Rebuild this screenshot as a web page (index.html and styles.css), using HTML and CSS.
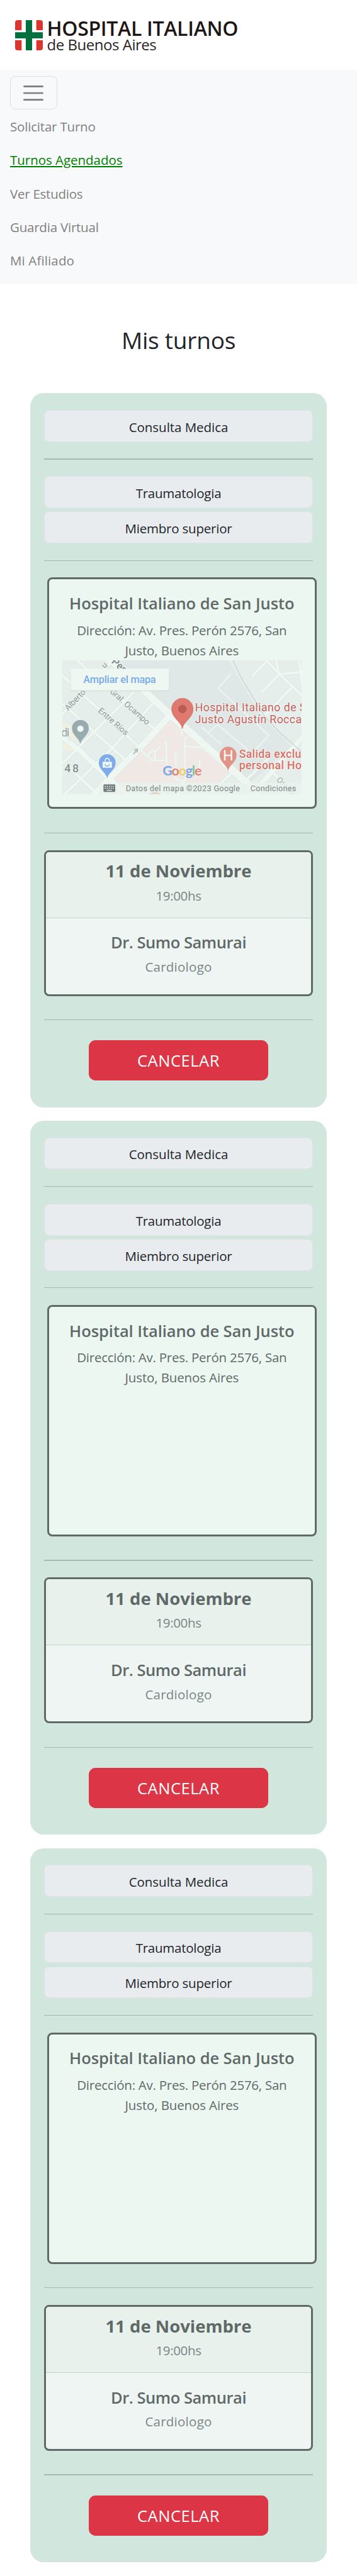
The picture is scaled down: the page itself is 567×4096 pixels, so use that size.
FILE: index.html
```html
<!DOCTYPE html>
<html lang="es">
<head>
<meta charset="utf-8">
<title>Mis turnos</title>
<link rel="stylesheet" href="styles.css">
</head>
<body>
<header class="brand">
  <svg class="brand-mark" viewBox="0 0 66 72">
    <path fill="#db3530" d="M6 0H15.500V24H0V6Q0 0 6 0ZM50.500 0H60Q66 0 66 6V24H50.500ZM0 48H15.500V72H6Q0 72 0 66ZM50.500 48H66V66Q66 72 60 72H50.500Z"/>
    <path fill="#02713e" d="M25.500 0H40.500V29H66V43.500H40.500V72H25.500V43.500H0V29H25.500Z"/>
  </svg>
  <div class="brand-text">
    <div class="brand-name">HOSPITAL ITALIANO</div>
    <div class="brand-city">de Buenos Aires</div>
  </div>
</header>

<nav class="navbar">
  <button class="toggler" aria-label="Menu">
    <svg viewBox="0 0 30 30"><path d="M4 7h22M4 15h22M4 23h22" stroke="#7b7c7d" stroke-width="2" stroke-linecap="round"/></svg>
  </button>
  <a class="nav-link ls-solicitar">Solicitar Turno</a>
  <a class="nav-link active">Turnos Agendados</a>
  <a class="nav-link ls-ver">Ver Estudios</a>
  <a class="nav-link ls-guardia">Guardia Virtual</a>
  <a class="nav-link ls-afiliado">Mi Afiliado</a>
</nav>

<main>
  <h1>Mis turnos</h1>

  <section class="turno">
    <div class="pill">Consulta Medica</div>
    <hr>
    <div class="pill pill-area">Traumatologia</div>
    <div class="pill pill-zone">Miembro superior</div>
    <hr>
    <div class="place">
      <h2>Hospital Italiano de San Justo</h2>
      <p class="address"><span class="line-1">Dirección: Av. Pres. Perón 2576, San</span> <span class="line-2">Justo, Buenos Aires</span></p>
      <svg class="map" viewBox="0 0 570 320">
        <rect width="570" height="320" fill="#e6eeeb"/>
        <path fill="#e0e8e7" d="M130 0H395L472 130L545 205L440 300L250 120Z"/>
        <path fill="#f0f0de" d="M0 148L22 156L39 196L18 180L0 170ZM0 203L9 191L32 213L25 220L0 209Z"/>
        <path fill="#efe8e4" d="M259 143L219 179L185 213L125 279L139 293H375L399 266L285 163Z"/>
        <g fill="none" stroke-linejoin="round">
          <g stroke="#dbe4e1">
            <path stroke-width="8" d="M0 36L185 209M35 0L219 163M0 103L152 239M172 74L0 246M222 96L119 209L5 320M120 0L0 129M9 249L85 320"/>
            <path stroke-width="8" d="M482 -5L517 33L570 83M454 36L489 0M477 74L517 33L567 28M517 33L509 0M564 0L570 53M547 64L485 129M409 263L350 320M434 289L492 233M499 266L560 320"/>
            <path stroke-width="19" d="M110 -5L192 70L257 130L320 185L470 320"/>
            <path stroke-width="17" d="M258 130L185 209L105 289L72 325"/>
            <path stroke-width="14" d="M-5 180L39 213L109 279L160 325M575 180L479 289L450 325"/>
          </g>
          <g stroke="#eef7f2">
            <path stroke-width="6" d="M0 36L185 209M35 0L219 163M0 103L152 239M172 74L0 246M222 96L119 209L5 320M120 0L0 129M9 249L85 320"/>
            <path stroke-width="6" stroke-linecap="round" d="M482 -5L517 33L570 83M454 36L489 0M477 74L517 33L567 28M517 33L509 0M564 0L570 53M547 64L485 129M409 263L350 320M434 289L492 233M499 266L560 320"/>
            <path stroke-width="17" d="M110 -5L192 70L257 130L320 185L470 320"/>
            <path stroke-width="15" d="M258 130L185 209L105 289L72 325"/>
            <path stroke-width="12" d="M-5 180L39 213L109 279L160 325M575 180L479 289L450 325"/>
            <path stroke-width="2.500" d="M402 31L371 67L425 116L492 179L439 236M332 158L347 173L379 201M347 173L369 153L442 213"/>
          </g>
          <path stroke="#ced8d6" stroke-width="2.500" d="M407 0Q420 33 439 63L479 129Q497 152 519 173L570 218"/>
          <path stroke="#e6eeea" stroke-width="5" stroke-linecap="round" d="M185 213L214 239L249 238M205 226L212 216L225 214L232 206M220 216L221 238M247 194L249 249M270 219L271 263M297 184Q291 190 291 198L294 206L332 207L379 246M291 206L294 283L287 291L265 279M327 236V259M285 163V180"/>
          <path stroke="#eef7f2" stroke-width="3" stroke-linecap="round" d="M185 213L214 239L249 238M205 226L212 216L225 214L232 206M220 216L221 238M247 194L249 249M270 219L271 263M297 184Q291 190 291 198L294 206L332 207L379 246M291 206L294 283L287 291L265 279M327 236V259M285 163V180"/>
          <path stroke="#e5eae7" stroke-width=".7" d="M0 191.500H570"/>
          <path stroke="#b3bdbb" stroke-width="3" d="M169 224L178 213M171 214L179 211.500L178 220"/>
        </g>
        <g class="street">
          <text transform="translate(14 121) rotate(-46)" textLength="61">Alberto</text>
          <text transform="translate(101 20) rotate(-46)">u</text>
          <text transform="translate(112 76) rotate(41.500)" textLength="119">Gral. Ocampo</text>
          <text transform="translate(84 122) rotate(41)" textLength="88">Entre Ríos</text>
          <text class="avenue" transform="translate(116 5) rotate(42)">Per</text>
          <text class="faint" transform="translate(509 286) rotate(45)" textLength="54">Ombú</text>
        </g>
        <rect x="88" y="292" width="482" height="28" fill="#eaf2ee" opacity=".8"/>
        <ellipse cx="221" cy="322" rx="14" ry="8" fill="#ecd0ca"/>
        <rect x="19" y="22" width="236" height="52" rx="4" fill="#cdd8d4" opacity=".7"/>
        <rect x="20" y="20" width="234" height="51.500" rx="3" fill="#eef7f2"/>
        <text class="enlarge" x="50" y="54.300" textLength="173">Ampliar el mapa</text>

        <path fill="#98abae" d="M43 200C41 186 23 179 23 162A20 20 0 0 1 63 162C63 179 45 186 43 200Z"/>
        <circle cx="43" cy="163" r="7.500" fill="#eef7f2"/>
        <path fill="#7eacea" d="M107 282C105 268 87 261 87 244A20 20 0 0 1 127 244C127 261 109 268 107 282Z"/>
        <path fill="#eef7f2" d="M96 242H118V256H96Z"/>
        <path fill="none" stroke="#eef7f2" stroke-width="2" d="M102 242V239A5 5 0 0 1 112 239V242"/>
        <path fill="none" stroke="#7eacea" stroke-width="2" d="M102 247A5 5 0 0 0 112 247"/>
        <path fill="#e07a70" stroke="#c9635c" stroke-width="1" d="M286 163C283 145 260.500 138 260.500 116A25.500 25.500 0 0 1 311.500 116C311.500 138 289 145 286 163Z"/>
        <circle cx="286" cy="116" r="10" fill="#bb5b56"/>
        <path fill="#e39287" d="M395 264C393 250 375 243 375 226A20 20 0 0 1 415 226C415 243 397 250 395 264Z"/>
        <path fill="none" stroke="#f1f3ee" stroke-width="4" d="M387 214V239M403 214V239M387 226.500H403"/>

        <g class="label">
          <text class="hospital" x="316" y="121.700" textLength="265">Hospital Italiano de S</text>
          <text class="hospital" x="316" y="149.500" textLength="254">Justo Agustín Rocca</text>
          <text class="exit" x="421" y="232" textLength="148">Salida exclu</text>
          <text class="exit" x="421" y="259.700" textLength="149">personal Ho</text>
          <text class="number" x="5" y="267.700" textLength="34">48</text>
          <text class="shop" x="-3" y="181" textLength="20">di</text>
        </g>
        <text class="google" x="239" y="275" textLength="93"><tspan fill="#7aa8ea">G</tspan><tspan fill="#e2857c">o</tspan><tspan fill="#edcf5f">o</tspan><tspan fill="#7aa8ea">g</tspan><tspan fill="#83c795">l</tspan><tspan fill="#e2857c">e</tspan></text>
        <rect x="98" y="296" width="28" height="18" rx="2" fill="#737d7b"/>
        <path stroke="#e6eeeb" stroke-width="2" stroke-dasharray="3 2" d="M101 300.500H123M101 305H123"/>
        <path stroke="#e6eeeb" stroke-width="2" d="M106 310H118"/>
        <text class="legal" x="151" y="312" textLength="272">Datos del mapa ©2023 Google</text>
        <text class="legal" x="448" y="312" textLength="109">Condiciones</text>
      </svg>
    </div>
    <hr class="wide">
    <div class="date">
      <div class="date-head">
        <h3>11 de Noviembre</h3>
        <div class="time">19:00hs</div>
      </div>
      <div class="date-body">
        <h4>Dr. Sumo Samurai</h4>
        <div class="role">Cardiologo</div>
      </div>
    </div>
    <hr class="last">
    <button class="cancel">CANCELAR</button>
  </section>

  <section class="turno">
    <div class="pill">Consulta Medica</div>
    <hr>
    <div class="pill pill-area">Traumatologia</div>
    <div class="pill pill-zone">Miembro superior</div>
    <hr>
    <div class="place">
      <h2>Hospital Italiano de San Justo</h2>
      <p class="address"><span class="line-1">Dirección: Av. Pres. Perón 2576, San</span> <span class="line-2">Justo, Buenos Aires</span></p>
    </div>
    <hr class="wide">
    <div class="date">
      <div class="date-head">
        <h3>11 de Noviembre</h3>
        <div class="time">19:00hs</div>
      </div>
      <div class="date-body">
        <h4>Dr. Sumo Samurai</h4>
        <div class="role">Cardiologo</div>
      </div>
    </div>
    <hr class="last">
    <button class="cancel">CANCELAR</button>
  </section>

  <section class="turno">
    <div class="pill">Consulta Medica</div>
    <hr>
    <div class="pill pill-area">Traumatologia</div>
    <div class="pill pill-zone">Miembro superior</div>
    <hr>
    <div class="place">
      <h2>Hospital Italiano de San Justo</h2>
      <p class="address"><span class="line-1">Dirección: Av. Pres. Perón 2576, San</span> <span class="line-2">Justo, Buenos Aires</span></p>
    </div>
    <hr class="wide">
    <div class="date">
      <div class="date-head">
        <h3>11 de Noviembre</h3>
        <div class="time">19:00hs</div>
      </div>
      <div class="date-body">
        <h4>Dr. Sumo Samurai</h4>
        <div class="role">Cardiologo</div>
      </div>
    </div>
    <hr class="last">
    <button class="cancel">CANCELAR</button>
  </section>
</main>
</body>
</html>
```

FILE: styles.css
```css
* { box-sizing: border-box; margin: 0; padding: 0; }

body {
  font-family: "Open Sans", "Noto Sans", sans-serif;
  font-size: 20.5px;
  line-height: 32px;
  color: #212529;
  background: #fff;
}

button { font-family: inherit; }

/* Header */
.brand { display: flex; height: 110.67px; padding: 32px 0 0 24px; }
.brand-mark { width: 44px; height: 48px; flex: none; }
.brand-text { padding-left: 6.5px; white-space: nowrap; }
.brand-name {
  margin-top: -2.4px;
  font-size: 32px;
  font-weight: 600;
  line-height: 30px;
  letter-spacing: -0.3px;
  color: #1d1614;
}
.brand-city { font-size: 24px; line-height: 22px; letter-spacing: -0.47px; color: #2b2624; }

/* Navigation */
.navbar {
  display: flex;
  flex-direction: column;
  align-items: flex-start;
  height: 341px;
  padding: 10.67px 16px;
  background: #f8f9fa;
}
.toggler {
  display: flex;
  align-items: center;
  justify-content: center;
  width: 74.67px;
  height: 53.33px;
  border: 1px solid #dedfe0;
  border-radius: 8px;
  background: transparent;
}
.toggler svg { width: 40px; height: 40px; fill: none; }
.nav-link { padding: 10.67px 0; color: #808080; white-space: nowrap; }
.nav-link.active { color: #008000; text-decoration: underline; letter-spacing: -0.03px; }
.ls-solicitar { letter-spacing: -0.19px; }
.ls-ver { letter-spacing: -0.25px; }
.ls-guardia { letter-spacing: -0.22px; }
.ls-afiliado { letter-spacing: 0.13px; }

/* Appointment list */
main { display: flex; flex-direction: column; align-items: center; padding-bottom: 21px; }
h1 {
  margin: 66.5px 0 61.8px;
  font-size: 37px;
  font-weight: 500;
  line-height: 45.3px;
  letter-spacing: -0.23px;
}
.turno {
  display: flex;
  flex-direction: column;
  width: 470.6px;
  height: 1135.33px;
  padding: 26.67px 21.33px 0;
  border-radius: 21.33px;
  background: #d1e7dd;
}
.turno + .turno { margin-top: 21.33px; }

.pill {
  height: 50.67px;
  padding-top: 9.8px;
  border: 1px solid #dee2e6;
  border-radius: 8px;
  background: #e9ecef;
  text-align: center;
  letter-spacing: -0.04px;
}
.pill-area { letter-spacing: -0.25px; }
.pill-zone { margin-top: 5.33px; letter-spacing: -0.21px; }

hr { flex: none; height: 1.33px; margin: 26.67px 0; border: 0; background: #a6b9b1; }
hr.wide { margin: 37.33px 0 26.67px; }
hr.last { margin: 37.33px 0 32px; }

.place {
  height: 368px;
  margin: 0 -5.33px 0 5.33px;
  padding: 21.7px 21px 0;
  border: 3px solid #5f6967;
  border-radius: 8px;
  background: #edf7f2;
  color: #5f6967;
  text-align: center;
  white-space: nowrap;
}
h2 { margin-bottom: 10.67px; font-size: 25.5px; font-weight: 600; line-height: 32px; letter-spacing: -0.07px; }
.address span { display: block; }
.line-1 { letter-spacing: -0.25px; }
.line-2 { letter-spacing: -0.13px; }

/* Map */
.map { display: block; width: 380px; height: 213.33px; font-family: Roboto, sans-serif; }
.street, .label { paint-order: stroke; stroke: #eef5f2; stroke-width: 3px; stroke-linejoin: round; }
.street { font-size: 19.5px; fill: #8b9492; }
.avenue { font-size: 24px; font-weight: 500; fill: #7d8684; }
.faint { fill: #9fa8a6; }
.label { font-size: 26.5px; }
.hospital { fill: #c5625d; }
.exit { font-weight: 500; fill: #db7167; }
.number { font-weight: 500; fill: #858e8c; }
.shop { font-size: 28px; fill: #8fa1a4; }
.enlarge { font-size: 24.5px; font-weight: 500; fill: #78abe9; }
.google { font-family: Lato, sans-serif; font-size: 32px; font-weight: 700; }
.legal { font-size: 19px; fill: #7f8886; }

/* Date and doctor */
.date {
  height: 232px;
  border: 3px solid #5f6967;
  border-radius: 8px;
  background: #eff5f3;
  color: #5f6967;
  text-align: center;
  overflow: hidden;
}
.date-head { height: 105px; padding-top: 12.4px; border-bottom: 1px solid #c8cfcc; background: #e8f1ec; }
h3 { font-size: 27.5px; font-weight: 700; line-height: 35.2px; }
.time { margin-top: 9.4px; font-weight: 500; line-height: 25.6px; letter-spacing: -0.35px; color: #7a8586; }
.date-body { padding-top: 22.4px; }
h4 { font-size: 25.5px; font-weight: 600; line-height: 32px; letter-spacing: -0.45px; }
.role { margin-top: 10.9px; font-weight: 500; line-height: 25.6px; letter-spacing: 0.25px; color: #7a8586; }

.cancel {
  align-self: center;
  width: 285.5px;
  height: 64px;
  border: 0;
  border-radius: 10.67px;
  background: #dc3545;
  color: #fff;
  font-size: 25.5px;
  letter-spacing: 0.55px;
}
```
